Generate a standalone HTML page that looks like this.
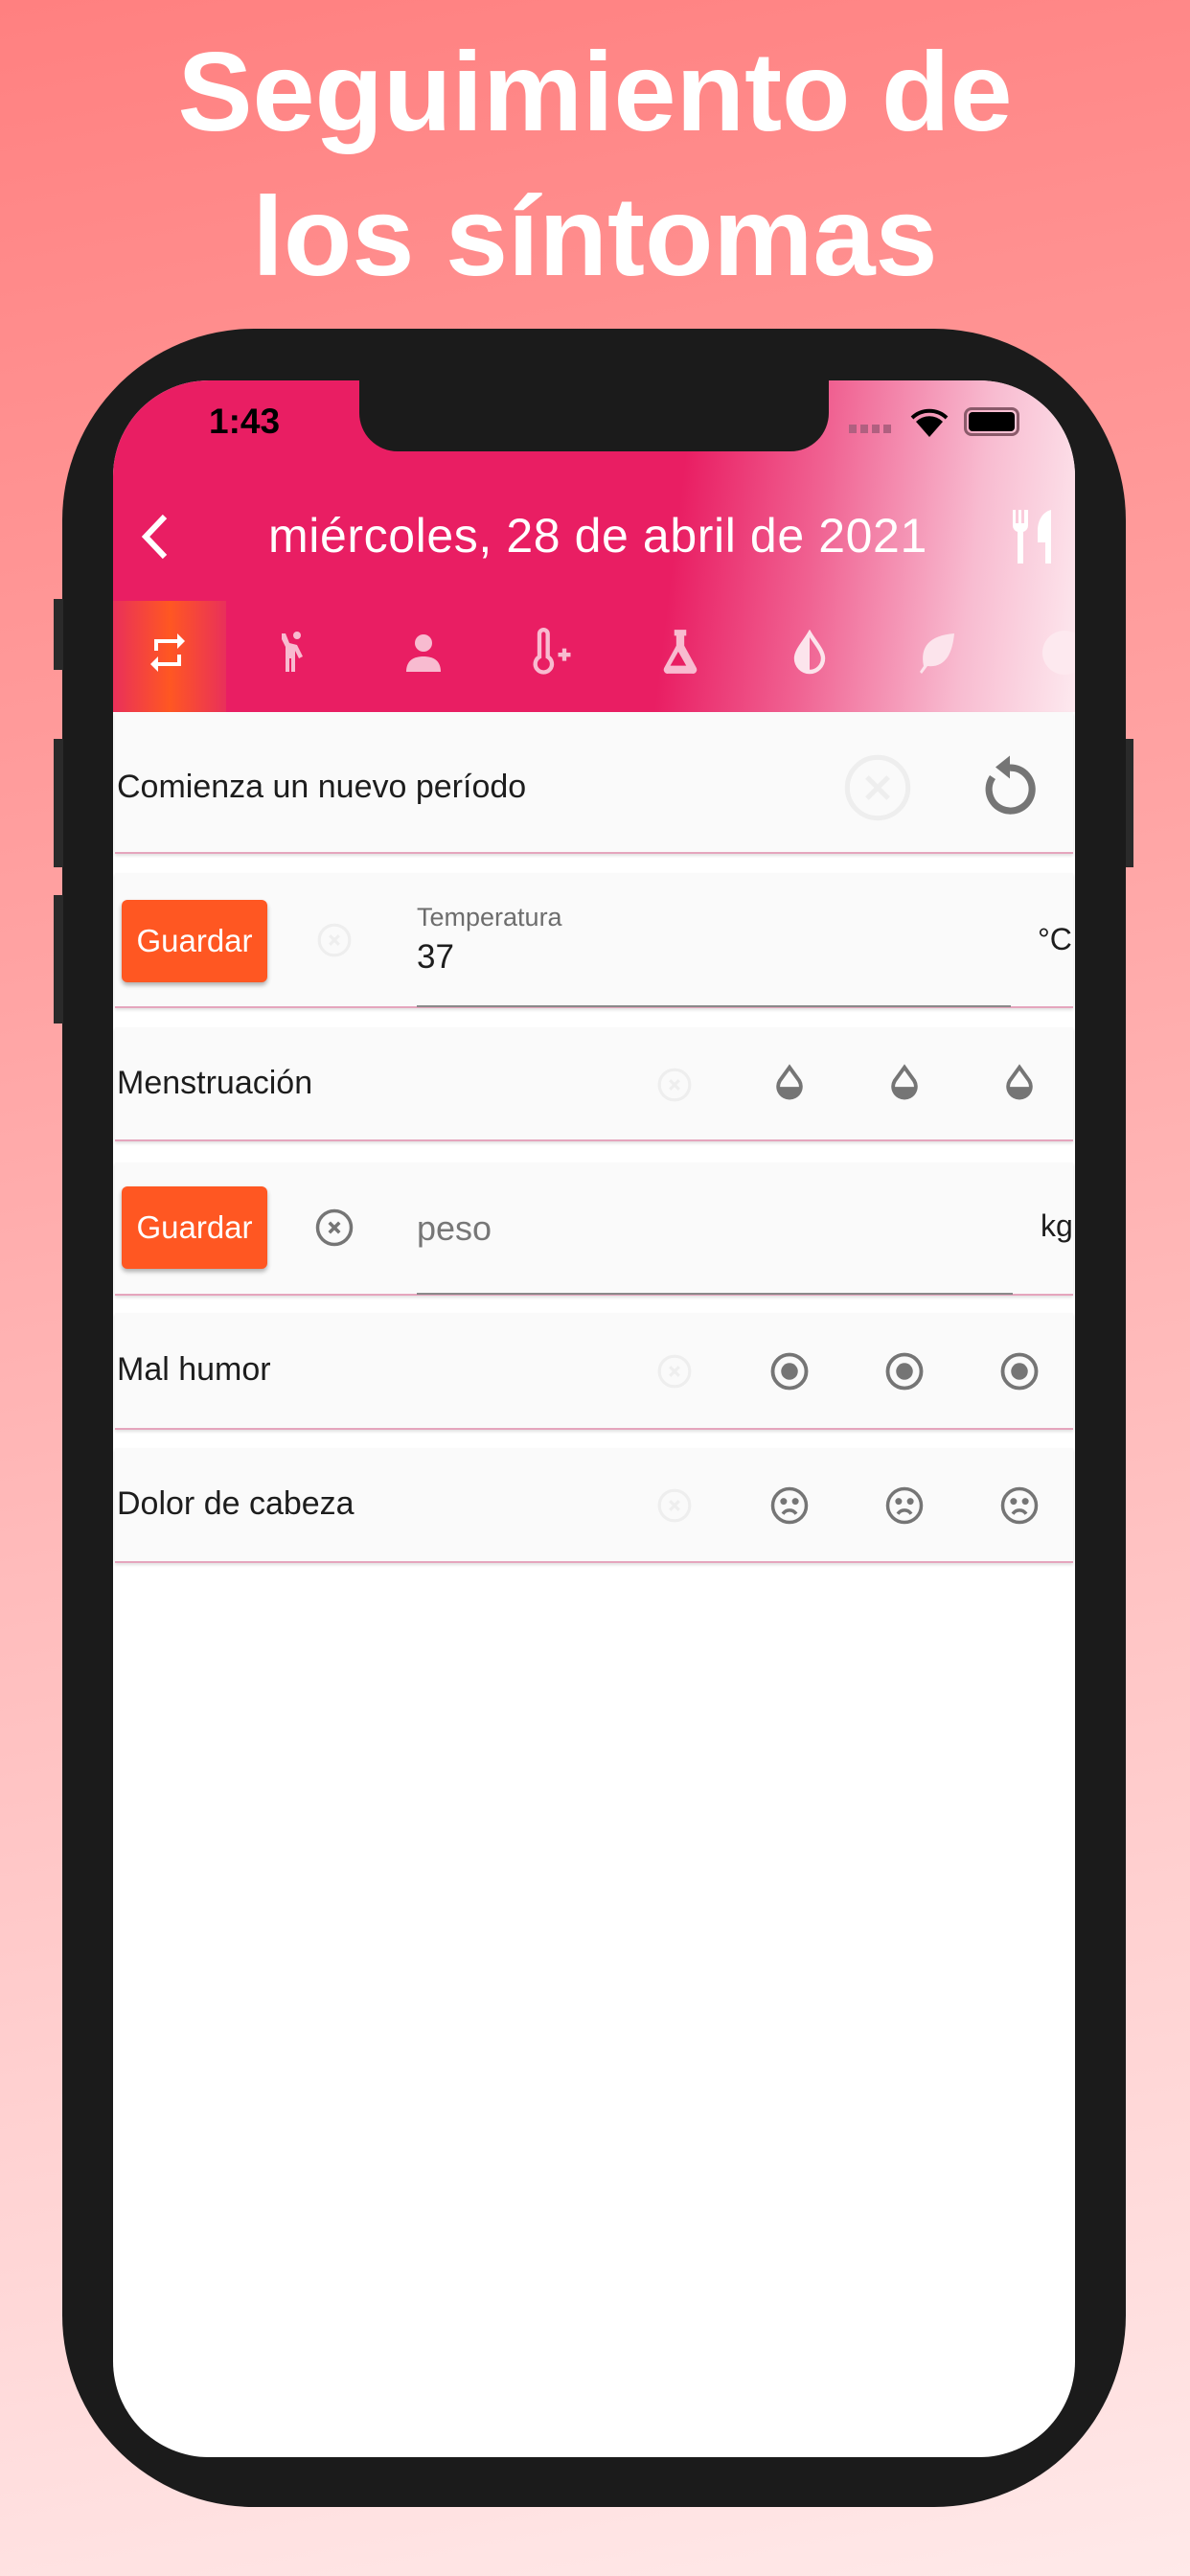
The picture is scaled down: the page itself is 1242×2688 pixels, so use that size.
<!DOCTYPE html>
<html><head><meta charset="utf-8"><style>
*{margin:0;padding:0;box-sizing:border-box}
body{width:1242px;height:2688px;overflow:hidden;position:relative;font-family:"Liberation Sans",sans-serif;background:linear-gradient(170deg,#ff8080 0%,#ffa3a3 35%,#ffd0d0 75%,#ffe9e9 100%)}
.t{position:absolute;left:0;width:1242px;text-align:center;color:#fff;font-weight:bold;font-size:117px;line-height:152px}
.phone{position:absolute;left:65px;top:343px;width:1110px;height:2273px;background:#1b1b1b;border-radius:200px}
.btn{position:absolute;background:#2a2a2a}
.screen{position:absolute;left:118px;top:397px;width:1004px;height:2167px;background:#fff;border-radius:100px;overflow:hidden}
.hdr{position:absolute;left:0;top:0;width:1004px;height:346px;background:linear-gradient(97deg,#e91e63 0%,#e91e63 58%,#f06292 72%,#f8bbd0 88%,#fde9ef 100%)}
.notch{position:absolute;left:257px;top:0;width:490px;height:74px;background:#1b1b1b;border-radius:0 0 40px 40px}
.ab{position:absolute;color:#fff}
.sel{position:absolute;left:0;top:230px;width:118px;height:116px;background:linear-gradient(90deg,#e9305a,#ff5722 50%,#e9305a)}
.card{position:absolute;left:2px;width:1000px;background:#fafafa;border-bottom:2px solid #e5a5bd;box-shadow:0 2px 3px rgba(0,0,0,.12)}
.lbl{position:absolute;left:4px;font-size:34px;color:#1d1d1d}
.g{position:absolute;left:9px;width:152px;height:86px;background:#ff5722;border-radius:6px;color:#fff;font-size:33px;text-align:center;line-height:86px;box-shadow:0 3px 5px rgba(0,0,0,.3)}
.ic{position:absolute}
</style></head><body>
<div class="t" style="top:20px">Seguimiento de</div>
<div class="t" style="top:171px">los síntomas</div>
<div class="phone"></div>
<div class="btn" style="left:56px;top:625px;width:10px;height:74px"></div>
<div class="btn" style="left:56px;top:771px;width:10px;height:134px"></div>
<div class="btn" style="left:56px;top:934px;width:10px;height:134px"></div>
<div class="btn" style="left:1175px;top:771px;width:8px;height:134px"></div>
<div class="screen">
 <div class="hdr"></div>
 <div class="notch"></div>
 <div class="ab" style="left:100px;top:22px;color:#000;font-size:37px;font-weight:bold">1:43</div>
 <div class="ab" style="left:768px;top:46px;width:46px;height:9px;background:repeating-linear-gradient(90deg,#b06080 0 8px,transparent 8px 12px)"></div>
 <svg class="ab" style="left:832px;top:27px" width="40" height="34" viewBox="0 0 40 34"><path d="M20 32 L6 16 A20 20 0 0 1 34 16 Z" fill="#000"/><path d="M2 12 A26 26 0 0 1 38 12" stroke="#000" stroke-width="4" fill="none"/></svg>
 <div class="ab" style="left:888px;top:28px;width:58px;height:30px;border:3px solid #8a5a6a;border-radius:8px;padding:2px"><div style="width:100%;height:100%;background:#000;border-radius:4px"></div></div>
 <svg class="ab" style="left:26px;top:138px" width="34" height="50" viewBox="0 0 34 50"><path d="M28 4 L8 25 L28 46" stroke="#fff" stroke-width="6" fill="none"/></svg>
 <div class="ab" style="left:162px;top:133px;font-size:50px;letter-spacing:0.6px">miércoles, 28 de abril de 2021</div>
 <svg class="ab" style="left:935px;top:135px" width="50" height="56" viewBox="0 0 50 56"><path d="M4 0v16a7 7 0 0 0 5 7v33h6V23a7 7 0 0 0 5-7V0h-4v14h-3V0h-3v14H7V0z" fill="#fff"/><path d="M30 34h8v22h6V0c-8 2-14 10-14 22z" fill="#fff"/></svg>
 <div class="sel"></div>
 <svg class="ab" style="left:33px;top:260px" width="48" height="48" viewBox="0 0 24 24"><path d="M7 7h10v3l4-4-4-4v3H5v6h2zm10 10H7v-3l-4 4 4 4v-3h12v-6h-2z" fill="#fff"/></svg>
 <svg class="ab" style="left:166px;top:258px" width="48" height="52" viewBox="0 0 24 24" fill="#f8bbd0"><circle cx="13" cy="3" r="2"/><path d="M5 2l2 0 2 5 4 1 3 6-2 1-2-4v11h-2v-7h-1v7H7V9L5 5z"/></svg>
 <svg class="ab" style="left:300px;top:260px" width="48" height="48" viewBox="0 0 24 24" fill="#f8bbd0"><circle cx="12" cy="7" r="4.5"/><path d="M3 22c0-6 4-8 9-8s9 2 9 8z"/></svg>
 <svg class="ab" style="left:432px;top:258px" width="52" height="52" viewBox="0 0 24 24" fill="none" stroke="#f8bbd0" stroke-width="2"><path d="M6 3a2 2 0 0 1 4 0v11a4 4 0 1 1-4 0z"/><path d="M15 13h6M18 10v6"/></svg>
 <svg class="ab" style="left:567px;top:258px" width="50" height="50" viewBox="0 0 24 24" fill="#f8bbd0"><path d="M9 1h6v3h-1v5l6 11a2 2 0 0 1-2 3H6a2 2 0 0 1-2-3l6-11V4H9z"/><path d="M7 19l4-7 4 7z" fill="#e91e63"/></svg>
 <svg class="ab" style="left:703px;top:260px" width="48" height="48" viewBox="0 0 24 24"><path d="M12 2C9 7 5 11 5 15a7 7 0 0 0 14 0c0-4-4-8-7-13z" fill="none" stroke="#fce4ec" stroke-width="2.2"/><path d="M12 4v18a7 7 0 0 1-7-7c0-4 4-8 7-11z" fill="#fce4ec"/></svg>
 <svg class="ab" style="left:836px;top:260px" width="48" height="48" viewBox="0 0 24 24" fill="#fce4ec"><path d="M21 2C8 3 3 9 5 19l-2 3 1 1 3-4c9 1 13-6 14-17z"/></svg>
 <div class="ab" style="left:970px;top:261px;width:46px;height:46px;border-radius:50%;background:#fde9ef"></div>
 <!-- row 1 -->
 <div class="card" style="top:346px;height:148px"></div>
 <div class="lbl" style="top:405px">Comienza un nuevo período</div>
 <svg class="ic" style="left:760px;top:387px" width="76" height="76" viewBox="0 0 24 24" fill="none" stroke="#eeeeee" stroke-width="1.6"><circle cx="12" cy="12" r="10"/><path d="M8.5 8.5l7 7M15.5 8.5l-7 7"/></svg>
 <svg class="ic" style="left:900px;top:380px" width="72" height="80" viewBox="0 0 24 26" fill="none" stroke="#757575" stroke-width="2.4"><path d="M6 11a7.5 7.5 0 1 0 6-3.3"/><path d="M12 3.5v8l-5-4z" fill="#757575" stroke="none"/></svg>
 <!-- row 2 -->
 <div class="card" style="top:514px;height:141px"></div>
 <div class="g" style="top:542px">Guardar</div>
 <svg class="ic" style="left:212px;top:565px" width="38" height="38" viewBox="0 0 24 24" fill="none" stroke="#eee" stroke-width="2"><circle cx="12" cy="12" r="10"/><path d="M9 9l6 6M15 9l-6 6"/></svg>
 <div class="lbl" style="left:317px;top:545px;font-size:27px;color:#6d6d6d">Temperatura</div>
 <div class="lbl" style="left:317px;top:582px;font-size:35px">37</div>
 <div style="position:absolute;left:317px;top:652px;width:620px;height:2px;background:#8a8a8a"></div>
 <div class="lbl" style="left:965px;top:565px;font-size:32px">°C</div>
 <!-- row 3 -->
 <div class="card" style="top:675px;height:119px"></div>
 <div class="lbl" style="top:714px">Menstruación</div>
 <svg class="ic" style="left:567px;top:716px" width="38" height="38" viewBox="0 0 24 24" fill="none" stroke="#eee" stroke-width="2"><circle cx="12" cy="12" r="10"/><path d="M9 9l6 6M15 9l-6 6"/></svg>
 <svg class="ic" style="left:687px;top:712px" width="38" height="44" viewBox="0 0 24 28"><path d="M12 3L5.5 12a7.5 7.5 0 1 0 13 0z" fill="none" stroke="#757575" stroke-width="2.5"/><path d="M4.5 16h15a7.5 7.5 0 0 1-15 0z" fill="#757575"/></svg>
 <svg class="ic" style="left:807px;top:712px" width="38" height="44" viewBox="0 0 24 28"><path d="M12 3L5.5 12a7.5 7.5 0 1 0 13 0z" fill="none" stroke="#757575" stroke-width="2.5"/><path d="M4.5 16h15a7.5 7.5 0 0 1-15 0z" fill="#757575"/></svg>
 <svg class="ic" style="left:927px;top:712px" width="38" height="44" viewBox="0 0 24 28"><path d="M12 3L5.5 12a7.5 7.5 0 1 0 13 0z" fill="none" stroke="#757575" stroke-width="2.5"/><path d="M4.5 16h15a7.5 7.5 0 0 1-15 0z" fill="#757575"/></svg>
 <!-- row 4 -->
 <div class="card" style="top:816px;height:139px"></div>
 <div class="g" style="top:841px">Guardar</div>
 <svg class="ic" style="left:210px;top:863px" width="42" height="42" viewBox="0 0 24 24" fill="none" stroke="#757575" stroke-width="2"><circle cx="12" cy="12" r="10"/><path d="M9 9l6 6M15 9l-6 6"/></svg>
 <div class="lbl" style="left:317px;top:864px;font-size:36px;color:#777">peso</div>
 <div style="position:absolute;left:317px;top:952px;width:622px;height:2px;background:#8a8a8a"></div>
 <div class="lbl" style="left:968px;top:864px;font-size:32px">kg</div>
 <!-- row 5 -->
 <div class="card" style="top:973px;height:122px"></div>
 <div class="lbl" style="top:1013px">Mal humor</div>
 <svg class="ic" style="left:567px;top:1015px" width="38" height="38" viewBox="0 0 24 24" fill="none" stroke="#eee" stroke-width="2"><circle cx="12" cy="12" r="10"/><path d="M9 9l6 6M15 9l-6 6"/></svg>
 <svg class="ic" style="left:685px;top:1013px" width="42" height="42" viewBox="0 0 24 24"><circle cx="12" cy="12" r="10" fill="none" stroke="#757575" stroke-width="2.2"/><circle cx="12" cy="12" r="5" fill="#757575"/></svg>
 <svg class="ic" style="left:805px;top:1013px" width="42" height="42" viewBox="0 0 24 24"><circle cx="12" cy="12" r="10" fill="none" stroke="#757575" stroke-width="2.2"/><circle cx="12" cy="12" r="5" fill="#757575"/></svg>
 <svg class="ic" style="left:925px;top:1013px" width="42" height="42" viewBox="0 0 24 24"><circle cx="12" cy="12" r="10" fill="none" stroke="#757575" stroke-width="2.2"/><circle cx="12" cy="12" r="5" fill="#757575"/></svg>
 <!-- row 6 -->
 <div class="card" style="top:1114px;height:120px"></div>
 <div class="lbl" style="top:1153px">Dolor de cabeza</div>
 <svg class="ic" style="left:567px;top:1155px" width="38" height="38" viewBox="0 0 24 24" fill="none" stroke="#eee" stroke-width="2"><circle cx="12" cy="12" r="10"/><path d="M9 9l6 6M15 9l-6 6"/></svg>
 <svg class="ic" style="left:685px;top:1153px" width="42" height="42" viewBox="0 0 24 24" fill="none" stroke="#757575" stroke-width="2"><circle cx="12" cy="12" r="10"/><circle cx="8.5" cy="9.5" r="1" fill="#757575"/><circle cx="15.5" cy="9.5" r="1" fill="#757575"/><path d="M8 17c2-3 6-3 8 0"/></svg>
 <svg class="ic" style="left:805px;top:1153px" width="42" height="42" viewBox="0 0 24 24" fill="none" stroke="#757575" stroke-width="2"><circle cx="12" cy="12" r="10"/><circle cx="8.5" cy="9.5" r="1" fill="#757575"/><circle cx="15.5" cy="9.5" r="1" fill="#757575"/><path d="M8 17c2-3 6-3 8 0"/></svg>
 <svg class="ic" style="left:925px;top:1153px" width="42" height="42" viewBox="0 0 24 24" fill="none" stroke="#757575" stroke-width="2"><circle cx="12" cy="12" r="10"/><circle cx="8.5" cy="9.5" r="1" fill="#757575"/><circle cx="15.5" cy="9.5" r="1" fill="#757575"/><path d="M8 17c2-3 6-3 8 0"/></svg>
</div>
</body></html>
